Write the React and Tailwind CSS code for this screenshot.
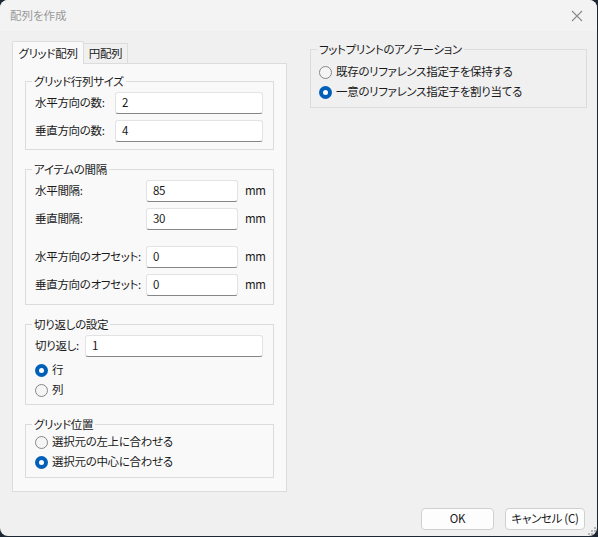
import React from "react";

function Radio({ checked, label }) {
  return (
    <div className="flex items-center h-[20px] gap-[4px] whitespace-nowrap">
      {checked ? (
        <span className="w-[13px] h-[13px] rounded-full bg-[#005fb8] flex items-center justify-center shrink-0">
          <span className="w-[5px] h-[5px] rounded-full bg-white" />
        </span>
      ) : (
        <span className="w-[13px] h-[13px] rounded-full border border-[#878787] bg-[#f5f5f5] shrink-0" />
      )}
      <span>{label}</span>
    </div>
  );
}

function Input({ value, className = "" }) {
  return (
    <div
      className={
        "h-[22px] bg-white border border-[#e3e3e3] border-b-[#868686] rounded-[3px] pl-[6px] flex items-center " +
        className
      }
    >
      {value}
    </div>
  );
}

function Group({ title, children, className = "" }) {
  return (
    <fieldset className={"border border-[#dcdcdc] p-0 m-0 min-w-0 " + className}>
      <legend className="ml-[6px] px-[2px] leading-[16px] whitespace-nowrap">{title}</legend>
      {children}
    </fieldset>
  );
}

function SpacingRow({ label, value }) {
  return (
    <div className="flex items-center h-[22px]">
      <span className="w-[111px] shrink-0 whitespace-nowrap">{label}</span>
      <Input value={value} className="w-[92px] shrink-0" />
      <span className="ml-[7px]">mm</span>
    </div>
  );
}

export default function App() {
  return (
    <div className="w-[598px] h-[537px] bg-[#1d2733] font-['Noto_Sans_CJK_JP',sans-serif] [font-feature-settings:'palt'] text-[11.5px] tracking-[-0.3px] text-[#1a1a1a]">
      <div className="w-[597px] h-[536px] rounded-[8px] overflow-hidden bg-[#f0f0f0] flex flex-col">
        {/* Title bar */}
        <div className="h-[31px] bg-[#f3f3f3] flex items-center justify-between pl-[10px] pr-[10px] shrink-0">
          <span className="text-[#999999] tracking-normal">配列を作成</span>
          <svg width="12" height="12" viewBox="0 0 12 12" className="mr-[4px]">
            <path d="M1 1 L11 11 M11 1 L1 11" stroke="#8a8a8a" strokeWidth="1.1" />
          </svg>
        </div>

        {/* Body */}
        <div className="flex-1 flex flex-col">
          <div className="flex pl-[12px] pt-[10px]">
            {/* Left column */}
            <div className="w-[275px] flex flex-col">
              <div className="flex items-end h-[22px]">
                <div className="w-[72px] h-[23px] -mb-px bg-[#f9f9f9] border border-b-0 border-[#dcdcdc] rounded-t-[2px] flex items-center justify-center relative z-10 pt-[1px]">
                  グリッド配列
                </div>
                <div className="w-[44px] h-[20px] bg-[#f0f0f0] border border-l-0 border-b-0 border-[#dcdcdc] flex items-center justify-center pt-[1px]">
                  円配列
                </div>
              </div>
              <div className="h-[429px] bg-[#f9f9f9] border border-[#dcdcdc] pt-[9px] px-[12px] flex flex-col gap-[11px]">
                <Group title="グリッド行列サイズ">
                  <div className="pl-[9px] pr-[10px] pt-[3px] pb-[7px] flex flex-col gap-[6px]">
                    <div className="flex items-center">
                      <span className="w-[80px] shrink-0 whitespace-nowrap">水平方向の数:</span>
                      <Input value="2" className="flex-1" />
                    </div>
                    <div className="flex items-center">
                      <span className="w-[80px] shrink-0 whitespace-nowrap">垂直方向の数:</span>
                      <Input value="4" className="flex-1" />
                    </div>
                  </div>
                </Group>

                <Group title="アイテムの間隔">
                  <div className="pl-[9px] pr-[10px] pt-[3px] pb-[8px] flex flex-col">
                    <div className="flex flex-col gap-[6px]">
                      <SpacingRow label="水平間隔:" value="85" />
                      <SpacingRow label="垂直間隔:" value="30" />
                    </div>
                    <div className="flex flex-col gap-[6px] mt-[16px]">
                      <SpacingRow label="水平方向のオフセット:" value="0" />
                      <SpacingRow label="垂直方向のオフセット:" value="0" />
                    </div>
                  </div>
                </Group>

                <Group title="切り返しの設定">
                  <div className="pl-[9px] pr-[10px] pt-[3px] pb-[4px] flex flex-col">
                    <div className="flex items-center">
                      <span className="w-[50px] shrink-0 whitespace-nowrap">切り返し:</span>
                      <Input value="1" className="flex-1" />
                    </div>
                    <div className="mt-[3px] flex flex-col">
                      <Radio checked label="行" />
                      <Radio label="列" />
                    </div>
                  </div>
                </Group>

                <Group title="グリッド位置">
                  <div className="pl-[9px] pr-[10px] pb-[5px] flex flex-col">
                    <Radio label="選択元の左上に合わせる" />
                    <Radio checked label="選択元の中心に合わせる" />
                  </div>
                </Group>
              </div>
            </div>

            {/* Right column */}
            <div className="w-[277px] ml-[23px]">
              <Group title="フットプリントのアノテーション">
                <div className="pl-[8px] pt-[5px] pb-[5px] flex flex-col">
                  <Radio label="既存のリファレンス指定子を保持する" />
                  <Radio checked label="一意のリファレンス指定子を割り当てる" />
                </div>
              </Group>
            </div>
          </div>

          {/* Buttons */}
          <div className="mt-auto flex justify-end gap-[11px] pr-[12px] pb-[6px] relative">
            <button className="w-[73px] h-[22px] bg-[#fdfdfd] border border-[#d0d0d0] rounded-[4px] flex items-center justify-center">
              OK
            </button>
            <button className="w-[80px] h-[22px] bg-[#fdfdfd] border border-[#d0d0d0] rounded-[4px] flex items-center justify-center whitespace-nowrap">
              キャンセル (C)
            </button>
            <svg width="8" height="8" viewBox="0 0 8 8" className="absolute right-[1px] bottom-[1px]">
              <rect x="6" y="0" width="2" height="2" fill="#b5b5b5" />
              <rect x="3" y="3" width="2" height="2" fill="#b5b5b5" />
              <rect x="6" y="3" width="2" height="2" fill="#b5b5b5" />
              <rect x="0" y="6" width="2" height="2" fill="#b5b5b5" />
              <rect x="3" y="6" width="2" height="2" fill="#b5b5b5" />
              <rect x="6" y="6" width="2" height="2" fill="#b5b5b5" />
            </svg>
          </div>
        </div>
      </div>
    </div>
  );
}
